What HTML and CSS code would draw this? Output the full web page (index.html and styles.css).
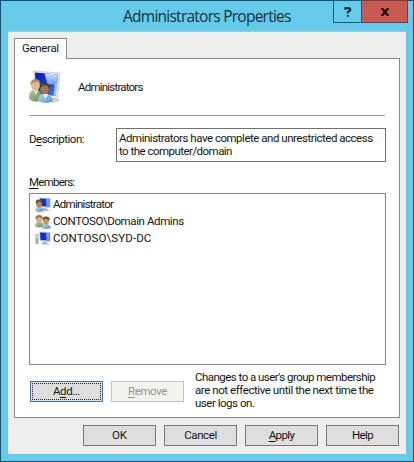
FILE: index.html
```
<!DOCTYPE html>
<html lang="en">
<head>
<meta charset="utf-8">
<title>Administrators Properties</title>
<link rel="stylesheet" href="styles.css">
</head>
<body>
<svg class="defs" width="0" height="0" aria-hidden="true">
  <defs>
    <linearGradient id="screen" x1="0" y1="0" x2="1" y2="1"><stop offset="0" stop-color="#0718c8"/><stop offset=".55" stop-color="#1740c4"/><stop offset="1" stop-color="#5a8ae4"/></linearGradient>
    <linearGradient id="glare" x1="0" y1="0" x2="0" y2="1"><stop offset="0" stop-color="#d2dff8"/><stop offset="1" stop-color="#6f98e2"/></linearGradient>
    <linearGradient id="green" x1="0" y1="0" x2="1" y2="1"><stop offset="0" stop-color="#b3cf98"/><stop offset="1" stop-color="#648e50"/></linearGradient>
    <linearGradient id="blue" x1="0" y1="0" x2="1" y2="1"><stop offset="0" stop-color="#b4d8f6"/><stop offset="1" stop-color="#5b8fc8"/></linearGradient>
  </defs>
</svg>
<div class="window">
  <header class="titlebar">
    <h1 class="title">Administrators Properties</h1>
    <div class="controls">
      <button class="help" aria-label="Help"><svg width="8" height="10" viewBox="0 0 8 10"><path d="M1.3 2.8V1.2H5.5L6.2 2V3.4L3.8 5V6.4M3.8 8V9.8" fill="none" stroke="#10242c" stroke-width="1.9"/></svg></button>
      <button class="close" aria-label="Close"><svg width="10" height="8" viewBox="0 0 10 8"><path d="M1.7 0L8.3 8M8.3 0L1.7 8" fill="none" stroke="#241010" stroke-width="2.3"/></svg></button>
    </div>
  </header>
  <main class="client">
    <div class="tab">General</div>
    <section class="panel">
      <div class="identity">
        <svg width="32" height="34" viewBox="0 0 32 34">
          <path d="M8 28L24 33L31 31L27 27Z" fill="#d4d4cf"/>
          <path d="M4.500 1L31 3L28.500 29L8 27Z" fill="#e8e9e6" stroke="#b9bbb8" stroke-width=".6"/>
          <path d="M6 2.500L29 4.500L26.500 26L7 24Z" fill="url(#screen)"/>
          <path d="M15.500 3.300L29 4.500L28 15L18.500 14Z" fill="url(#glare)"/>
          <path d="M28 14L26.500 26L24.500 25.800L26 14Z" fill="#a9c2ec"/>
          <path d="M0 29C0 22 2 20 6 19.500S13 22 13 30Q6 34 0 29Z" fill="url(#green)"/>
          <path d="M4 20L7 25L9 20Z" fill="#e6eddb"/>
          <ellipse cx="6.500" cy="15.500" rx="4.300" ry="5.400" fill="#e0b991"/>
          <path d="M1.500 15.500Q1 9 6.500 9Q12 9 11 15.500L9 12L4 12.500Z" fill="#b08f57"/>
          <path d="M9 31Q9 24 15.500 23.500T24 31Q17 35 9 31Z" fill="url(#blue)"/>
          <path d="M14 24L16.500 29L19 24Z" fill="#edf5fb"/>
          <ellipse cx="15.500" cy="19" rx="4.400" ry="5.300" fill="#a77850"/>
          <path d="M11 19Q10.500 12.500 15.500 12.500Q21 12.500 20 19L18 15.500L14 15.500Z" fill="#4c443c"/>
        </svg>
        <span class="name">Administrators</span>
      </div>
      <hr class="rule">
      <div class="description">
        <label class="desc-label">D<u>e</u>scription:</label>
        <div class="desc-box"><div class="d1">Administrators have complete and unrestricted access</div><div class="d2">to the computer/domain</div></div>
      </div>
      <label class="members-label"><u>M</u>embers:</label>
      <ul class="members">
        <li>
          <svg width="16" height="16" viewBox="0 0 16 16"><path d="M4 .5L15.500 1V11L5 10.500Z" fill="#c3cbdd"/><path d="M5 1.500L14.500 2V9.500L5.500 9Z" fill="#1631bd"/><path d="M11 1.800L14.500 2V9.500L11.500 9Z" fill="#7599e4"/><path d="M8 11H12V12L15 14H8Z" fill="#b2b8bb"/><path d="M0 14Q1 10 4.500 10T9 14Q5 16 0 14Z" fill="url(#blue)"/><ellipse cx="4" cy="7" rx="2.800" ry="3.700" fill="#bb8858"/><path d="M1 7Q0 2 4 2.500Q7.500 3 6.700 6L4 4.500Z" fill="#61543d"/></svg>
          <span class="m1">Administrator</span>
        </li>
        <li>
          <svg width="16" height="16" viewBox="0 0 16 16"><path d="M0 12Q0 8 4 8T9 12Q4 15 0 12Z" fill="url(#green)"/><ellipse cx="4" cy="5.500" rx="3" ry="3.800" fill="#d9ae88"/><path d="M.5 5.500Q0 1 4 1Q8.500 1 7.500 5L4 3Z" fill="#9b773e"/><path d="M6.500 14Q7 10 11 10T16 14Q11 16 6.500 14Z" fill="url(#blue)"/><ellipse cx="11" cy="7" rx="3" ry="3.700" fill="#c6956c"/><path d="M7.500 6.500Q7.500 2 11 2.500Q15.500 2.500 14.500 6.500L11 4.500Z" fill="#6b563c"/></svg>
          <span class="m2">CONTOSO\Domain Admins</span>
        </li>
        <li>
          <svg width="16" height="16" viewBox="0 0 16 16"><path d="M.5 3.500L3.500 3V13L.5 13Z" fill="#a4a9ad"/><path d="M1.500 4.500H2.700V7H1.500Z" fill="#f6f6f4"/><path d="M4 .5L15.500 1V11L5 10.500Z" fill="#c7ceda"/><path d="M5 1.500L14.500 2V9.500L5.500 9Z" fill="#172fba"/><path d="M11 1.800L14.500 2V9.500L11.500 9Z" fill="#7498e2"/><path d="M8 11H12V12L15 13.500H6Z" fill="#b0b5b8"/></svg>
          <span class="m3">CONTOSO\SYD-DC</span>
        </li>
      </ul>
      <div class="actions">
        <button class="btn focused"><span class="b-add">A<u>d</u>d...</span></button>
        <button class="btn disabled" disabled><span class="b-remove"><u>R</u>emove</span></button>
        <p class="note"><span class="n1">Changes to a user's group membership</span><br><span class="n2">are not effective until the next time the</span><br><span class="n3">user logs on.</span></p>
      </div>
    </section>
    <footer class="footer">
      <button class="btn"><span class="b-ok">OK</span></button>
      <button class="btn"><span class="b-cancel">Cancel</span></button>
      <button class="btn"><span class="b-apply"><u>A</u>pply</span></button>
      <button class="btn"><span class="b-help">Help</span></button>
    </footer>
  </main>
</div>
</body>
</html>
```
FILE: styles.css
```
* { box-sizing: border-box; }
body { margin: 0; font: 11.5px/13px Roboto, "Liberation Sans", sans-serif; letter-spacing: -.45px; color: #151515; }
.defs { display: block; }
u { text-decoration: underline; text-decoration-thickness: 1px; text-underline-offset: 2px; text-decoration-skip-ink: none; }
svg { display: block; flex: none; }
.window { width: 414px; height: 462px; border: 1px solid #17506a; background: #66cbea; padding: 0 7px; }
.titlebar { height: 30px; position: relative; }
.title { margin: 0; padding-left: 115px; font: 15.5px/30px "Open Sans", sans-serif; letter-spacing: -.75px; color: #12313e; white-space: nowrap; }
.controls { position: absolute; top: -1px; right: -2px; display: flex; height: 23px; }
.controls button { border: 1px solid #265668; padding: 0; display: flex; align-items: center; justify-content: center; }
.controls .help { width: 28px; background: #66cbea; border-right: 0; }
.controls .close { width: 47px; background: #c75b52; border-color: #713f42; }
.client { height: 423px; width: 398px; background: #eee; border-top: 1px solid #a0ccd9; padding: 6px 6px 0; }
.tab { position: relative; width: 53px; height: 21px; margin-bottom: -1px; border: 1px solid #898989; border-bottom: 0; background: #fff; padding: 3px 0 0 7px; z-index: 1; white-space: nowrap; letter-spacing: -.33px; }
.panel { width: 386px; height: 360px; border: 1px solid #898989; background: #fff; padding: 11px 13px 0 14px; }
.identity { display: flex; align-items: center; height: 34px; gap: 17px; }
.name { letter-spacing: -.79px; }
.rule { height: 1px; border: 0; background: #999; margin: 11px 0 0; width: 356px; }
.description { display: flex; margin-top: 12px; }
.desc-label { flex: none; width: 87px; padding-top: 5px; letter-spacing: -.5px; }
.desc-box { flex: none; width: 270px; height: 34px; border: 1px solid #707070; padding: 3px 0 0 2px; white-space: nowrap; }
.d1 { letter-spacing: -.48px; }
.d2 { letter-spacing: -.53px; }
.members-label { display: block; margin-top: 14px; height: 17px; letter-spacing: -.75px; }
.members { list-style: none; margin: 0; width: 357px; height: 172px; border: 1px solid #858585; padding: 2px 0 0 5px; }
.members li { height: 17px; display: flex; align-items: center; gap: 2px; white-space: nowrap; }
.m1 { letter-spacing: -.73px; }
.m2 { letter-spacing: -.4px; }
.m3 { letter-spacing: .1px; }
.actions { display: flex; padding: 8px 0 0 1px; }
.btn { flex: none; font: inherit; color: inherit; width: 73px; height: 21px; padding: 0; border: 1px solid #777; background: #dedede; }
.actions .btn { margin-top: 8px; margin-right: 8px; }
.actions .focused { border-color: #4b73a0; position: relative; }
.focused::after { content: ""; position: absolute; inset: 1px; border: 1px dotted #222; }
.actions .disabled { color: #929292; background: #f4f4ef; border-color: #c2c4bd; }
.b-add { letter-spacing: -.45px; }
.b-remove { letter-spacing: -.37px; }
.b-ok { letter-spacing: 0; }
.b-cancel { letter-spacing: -.4px; }
.b-apply, .b-help { letter-spacing: -.6px; }
.note { margin: -2px 0 0 3px; white-space: nowrap; }
.n1 { letter-spacing: -.53px; }
.n2 { letter-spacing: -.43px; }
.n3 { letter-spacing: -.48px; }
.footer { display: flex; gap: 8px; margin: 7px 0 0 69px; }
```
